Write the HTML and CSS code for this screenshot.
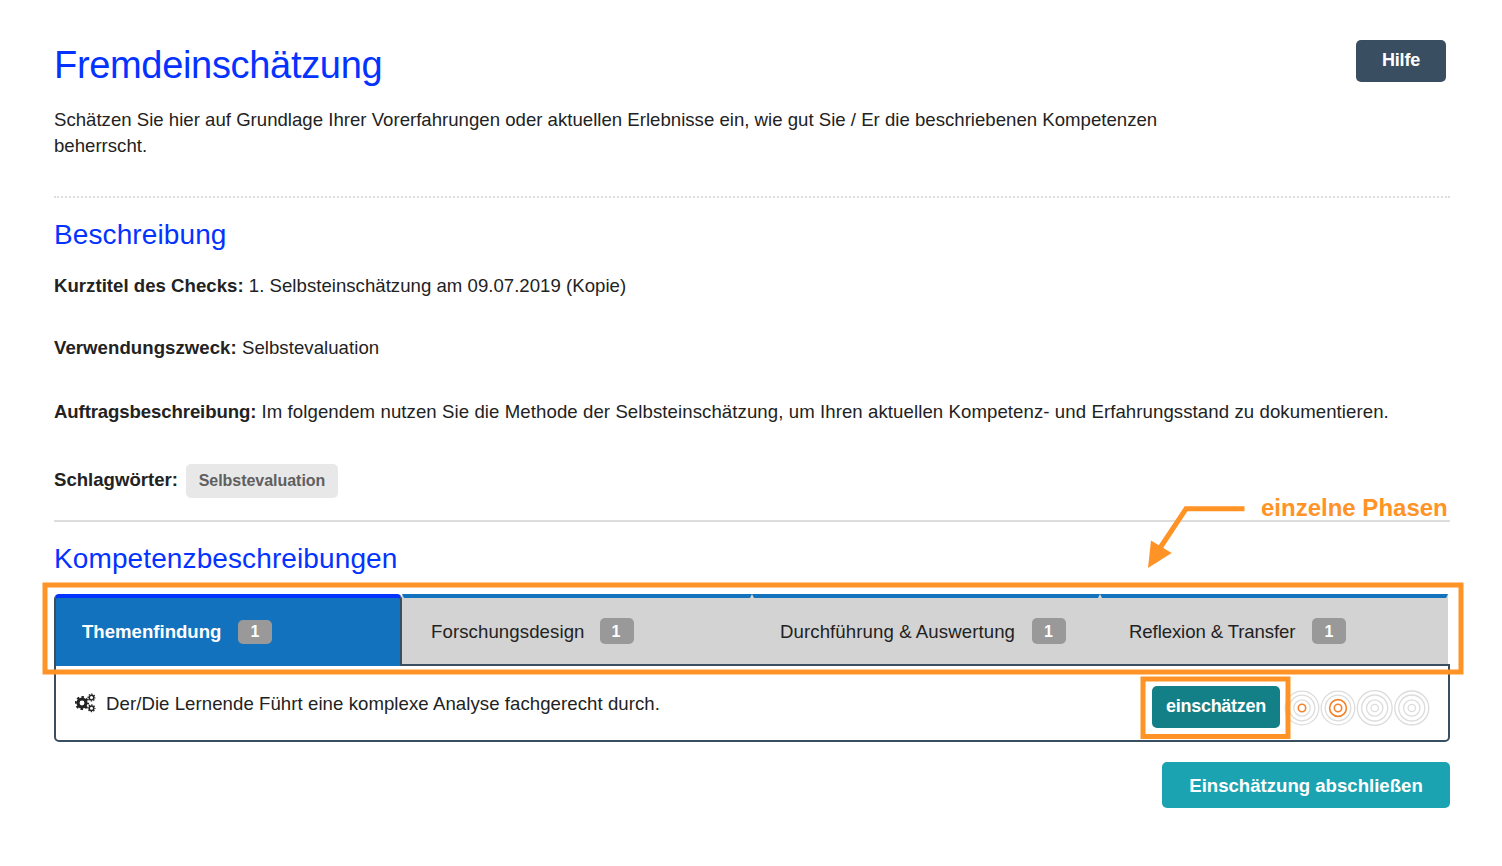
FILE: index.html
```html
<!DOCTYPE html>
<html lang="de">
<head>
<meta charset="utf-8">
<title>Fremdeinschätzung</title>
<link rel="stylesheet" href="styles.css">
</head>
<body>
<main class="page">
  <header class="page-head">
    <div class="intro">
      <h1 class="title">Fremdeinschätzung</h1>
      <p class="lead">Schätzen Sie hier auf Grundlage Ihrer Vorerfahrungen oder aktuellen Erlebnisse ein, wie gut Sie / Er die beschriebenen Kompetenzen<br>beherrscht.</p>
    </div>
    <button class="btn btn-help">Hilfe</button>
  </header>

  <section class="description">
    <h2 class="subtitle">Beschreibung</h2>
    <p class="field field-title"><b>Kurztitel des Checks:</b> 1. Selbsteinschätzung am 09.07.2019 (Kopie)</p>
    <p class="field field-purpose"><b>Verwendungszweck:</b> Selbstevaluation</p>
    <p class="field field-task"><b>Auftragsbeschreibung:</b> Im folgendem nutzen Sie die Methode der Selbsteinschätzung, um Ihren aktuellen Kompetenz- und Erfahrungsstand zu dokumentieren.</p>
    <div class="tags"><b>Schlagwörter:</b><span class="tag">Selbstevaluation</span></div>
  </section>

  <section class="competences">
    <h2 class="subtitle">Kompetenzbeschreibungen</h2>
    <nav class="tabs">
      <a class="tab active"><span class="label">Themenfindung</span><span class="count">1</span></a>
      <a class="tab tab-design"><span class="label">Forschungsdesign</span><span class="count">1</span></a>
      <a class="tab tab-execution"><span class="label">Durchführung &amp; Auswertung</span><span class="count">1</span></a>
      <a class="tab tab-transfer"><span class="label">Reflexion &amp; Transfer</span><span class="count">1</span></a>
    </nav>
    <div class="panel">
      <svg class="gears" width="21" height="20" viewBox="0 0 21 20">
        <g fill="none" stroke="#222">
          <circle cx="7" cy="10" r="4" stroke-width="3.1"/>
          <circle cx="7" cy="10" r="6.1" stroke-width="2" stroke-dasharray="2.5 2.29" stroke-dashoffset="1.25"/>
          <circle cx="16.5" cy="4.6" r="2.3" stroke-width="1.5"/>
          <circle cx="16.5" cy="4.6" r="3.4" stroke-width="1.2" stroke-dasharray="1.4 1.27" stroke-dashoffset=".7"/>
          <circle cx="16.5" cy="15.2" r="2.3" stroke-width="1.5"/>
          <circle cx="16.5" cy="15.2" r="3.4" stroke-width="1.2" stroke-dasharray="1.4 1.27" stroke-dashoffset=".7"/>
        </g>
      </svg>
      <p class="competence">Der/Die Lernende Führt eine komplexe Analyse fachgerecht durch.</p>
      <button class="btn btn-rate">einschätzen</button>
      <svg class="rings" width="147" height="36" viewBox="0 0 147 36" fill="none" stroke="#dcdcdc" stroke-width="1.3">
        <g><circle cx="18" cy="18" r="16.8"/><circle cx="18" cy="18" r="12.8"/><circle cx="18" cy="18" r="8.2"/><circle class="on" cx="18" cy="18" r="3.7"/></g>
        <g><circle cx="54" cy="18" r="16.8"/><circle cx="54" cy="18" r="12.8"/><circle class="on" cx="54" cy="18" r="8.4"/><circle class="on" cx="54" cy="18" r="3.7"/></g>
        <g><circle cx="90.7" cy="18" r="17.4"/><circle cx="90.7" cy="18" r="13"/><circle cx="90.7" cy="18" r="8.2"/><circle cx="90.7" cy="18" r="3.7"/></g>
        <g><circle cx="127.8" cy="18" r="17"/><circle cx="127.8" cy="18" r="13"/><circle cx="127.8" cy="18" r="8.2"/><circle cx="127.8" cy="18" r="3.7"/></g>
      </svg>
    </div>
    <div class="actions"><button class="btn btn-finish">Einschätzung abschließen</button></div>
  </section>
</main>
<svg class="marks" width="1502" height="866" viewBox="0 0 1502 866" fill="none" stroke="#ff9326" stroke-width="5">
  <rect x="45" y="585" width="1416" height="87"/>
  <rect x="1143" y="679" width="145" height="57.5"/>
  <path d="M1244.5 508.8H1186L1160 548"/>
  <path d="M1151 540.5L1171.7 553L1148 568Z" fill="#ff9326" stroke="none"/>
</svg>
<div class="callout">einzelne Phasen</div>
</body>
</html>
```
FILE: styles.css
```css
* { box-sizing: border-box; }
body { margin: 0; height: 866px; overflow: hidden; position: relative; background: #fff; color: #222; font: 18.6px/26px "Liberation Sans", Arial, sans-serif; }
h1, h2, p { margin: 0; font-weight: 400; }
.page { padding: 40px 52px 0 54px; }
.page-head { display: flex; justify-content: space-between; align-items: flex-start; height: 158px; border-bottom: 2px dotted #ddd; }
.title { font-size: 38px; line-height: 50px; letter-spacing: -.32px; color: #0433ff; margin-bottom: 17px; }
.lead { white-space: nowrap; letter-spacing: .01px; }
.btn { border: 0; border-radius: 5px; color: #fff; font: bold 18px/26px "Liberation Sans", Arial, sans-serif; padding: 0; white-space: nowrap; }
.btn-help { width: 90px; height: 42px; margin-right: 4px; padding-bottom: 2px; background: #3a4e62; letter-spacing: -.2px; }
.description { height: 324px; padding-top: 20px; border-bottom: 2px solid #ddd; }
.subtitle { font-size: 28px; line-height: 34px; letter-spacing: .11px; color: #0433ff; }
.field { white-space: nowrap; }
.field-title { margin-top: 21px; letter-spacing: .025px; }
.field-purpose { margin-top: 36px; letter-spacing: .05px; }
.field-task { margin-top: 38px; letter-spacing: .087px; }
.field-task b { letter-spacing: -.11px; }
.tags { display: flex; align-items: flex-start; gap: 8px; height: 34px; margin-top: 39px; }
.tags b { margin-top: 3px; }
.tag { width: 152px; height: 34px; border-radius: 5px; background: #e8e8e8; color: #5f5f5f; font-weight: bold; font-size: 16px; line-height: 33px; letter-spacing: -.03px; text-align: center; }
.competences { padding-top: 20px; }
.tabs { position: relative; display: grid; grid-template-columns: 348px 350px 348px 348px; height: 72px; margin-top: 18px; }
.tab { display: flex; align-items: center; gap: 17px; height: 70px; padding-left: 27px; background: #d3d3d3; border: 2px solid #d3d3d3; border-top: 4px solid #1272be; border-bottom: 0; }
.label { padding-top: 2px; }
.tab.active { z-index: 1; height: 72px; padding-left: 26px; border-color: #0433ff #3a4e62; border-radius: 5px 5px 0 0; background: #1272be; color: #fff; font-weight: bold; }
.active .label { padding-top: 0; }
.tab-design { gap: 15px; letter-spacing: .1px; }
.tab-execution { padding-left: 26px; letter-spacing: .1px; }
.tab-transfer { letter-spacing: -.1px; }
.count { width: 34px; height: 26px; padding-right: 1px; border-radius: 5px; background: #999; color: #fff; font-size: 16px; font-weight: bold; line-height: 27px; letter-spacing: 0; text-align: center; }
.active .count { height: 24px; line-height: 24px; }
.panel { display: flex; align-items: flex-start; height: 78px; margin-top: -2px; border: 2px solid #3a4e62; border-radius: 0 0 5px 5px; padding: 20px 17px 0 19px; }
.gears { flex: none; margin-top: 7px; }
.competence { margin: 5px 0 0 10px; flex: 1; white-space: nowrap; letter-spacing: .065px; }
.btn-rate { width: 128px; height: 42px; padding-bottom: 2px; background: #138088; letter-spacing: -.27px; }
.rings { margin: 4px 0 0 4px; }
.on { stroke: #f5822a; stroke-width: 1.6; }
.actions { display: flex; justify-content: flex-end; margin-top: 20px; }
.btn-finish { width: 288px; height: 46px; padding-top: 1px; background: #1ba3b1; font-size: 18.6px; }
.marks { position: absolute; left: 0; top: 0; z-index: 2; }
.callout { position: absolute; left: 1261px; top: 493px; color: #ff9326; font-size: 24px; line-height: 30px; font-weight: bold; white-space: nowrap; }
```
